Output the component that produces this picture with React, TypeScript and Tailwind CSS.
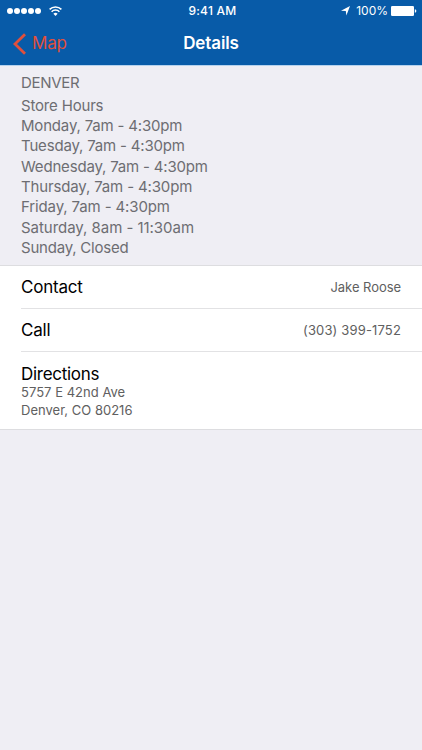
const storeHours = [
  { text: "Monday, 7am - 4:30pm", tracking: "tracking-[-0.18px]" },
  { text: "Tuesday, 7am - 4:30pm", tracking: "tracking-[-0.18px]" },
  { text: "Wednesday, 7am - 4:30pm", tracking: "tracking-[-0.18px]" },
  { text: "Thursday, 7am - 4:30pm", tracking: "tracking-[-0.15px]" },
  { text: "Friday, 7am - 4:30pm", tracking: "tracking-[-0.13px]" },
  { text: "Saturday, 8am - 11:30am", tracking: "tracking-[-0.04px]" },
  { text: "Sunday, Closed", tracking: "tracking-[-0.22px]" },
];

const contactRows = [
  { label: "Contact", value: "Jake Roose", tracking: "tracking-[-0.05px]" },
  { label: "Call", value: "(303) 399-1752", tracking: "tracking-[0.15px]" },
];

const StatusBar = () => (
  <div className="grid h-[22px] grid-cols-[1fr_auto_1fr] items-center pl-[7px] pr-[5px] text-white">
    <div className="flex items-center gap-[8px]">
      <div className="flex gap-[1.2px]">
        {[0, 1, 2, 3, 4].map((dot) => (
          <span key={dot} className="size-[5.9px] rounded-full bg-white" />
        ))}
      </div>
      <svg width="13" height="10" viewBox="0 0 13 10" fill="none" stroke="currentColor">
        <path d="M0.6 3.4a8.5 8.5 0 0 1 11.8 0" strokeWidth="1.6" />
        <path d="M2.6 5.7a5.6 5.6 0 0 1 7.8 0" strokeWidth="1.5" />
        <path d="M6.5 9.9 4.4 7.7a3.1 3.1 0 0 1 4.2 0Z" fill="currentColor" stroke="none" />
      </svg>
    </div>
    <span className="pl-px text-center text-[12px] font-medium tracking-[0.25px]">9:41 AM</span>
    <div className="flex items-center justify-end">
      <svg width="9" height="10" viewBox="0 0 9 10" fill="currentColor" className="mr-[6px]">
        <path d="M9 0 5.4 9.6 4.8 5.1 0 4.7Z" />
      </svg>
      <span className="mr-[3px] text-[12px]">100%</span>
      <svg width="26" height="10" viewBox="0 0 26 10" fill="currentColor">
        <rect width="23" height="10" rx="1.3" />
        <path d="M23.8 3.3c1.3.2 1.5.9 1.5 1.7s-.2 1.5-1.5 1.7Z" />
      </svg>
    </div>
  </div>
);

const NavBar = () => (
  <div className="grid h-[43px] grid-cols-3 items-center px-[12px]">
    <a href="#" className="flex items-center gap-[6px] text-[#e0503c]">
      <svg width="14" height="22" viewBox="0 0 14 22" fill="none" stroke="currentColor" strokeWidth="2.8">
        <path d="M13 1.2 3 11l10 9.8" />
      </svg>
      <span className="text-[17px] tracking-[-0.2px]">Map</span>
    </a>
    <h1 className="text-center text-[17px] font-semibold tracking-[-0.12px] text-white">Details</h1>
  </div>
);

const App = () => {
  return (
    <div className="h-[750px] w-[422px] overflow-hidden bg-[#efeef4] font-['Inter',sans-serif]">
      <header className="h-[65px] bg-[#085ba8]">
        <StatusBar />
        <NavBar />
      </header>

      {/* Store hours */}
      <section className="h-[200px] border-t border-[#b5d2ee] px-[21px] pt-[7px] text-[15px] tracking-[-0.18px] text-[#6d6d72]">
        <h2 className="mb-[2.4px] leading-[20.4px] tracking-[-0.3px]">DENVER</h2>
        <div className="leading-[20.3px]">
          <p>Store Hours</p>
          {storeHours.map((line) => (
            <p key={line.text} className={line.tracking}>
              {line.text}
            </p>
          ))}
        </div>
      </section>

      {/* Contact details */}
      <section className="border-y border-[#dddde0] bg-white pl-[21px]">
        {contactRows.map((row) => (
          <div key={row.label} className="flex h-[43px] items-center justify-between border-b border-[#e2e2e4] pr-[21px]">
            <span className="pt-[2px] text-[17px] tracking-[-0.2px] text-black">{row.label}</span>
            <span className={`pt-px text-[13px] text-[#606060] ${row.tracking}`}>{row.value}</span>
          </div>
        ))}
        <div className="h-[77px] pt-[12px]">
          <p className="text-[17px] leading-[20px] tracking-[-0.28px] text-black">Directions</p>
          <address className="-mt-px text-[13px] not-italic leading-[18px] tracking-[0.02px] text-[#606060]">
            5757 E 42nd Ave
            <br />
            Denver, CO 80216
          </address>
        </div>
      </section>
    </div>
  );
};

export default App;
